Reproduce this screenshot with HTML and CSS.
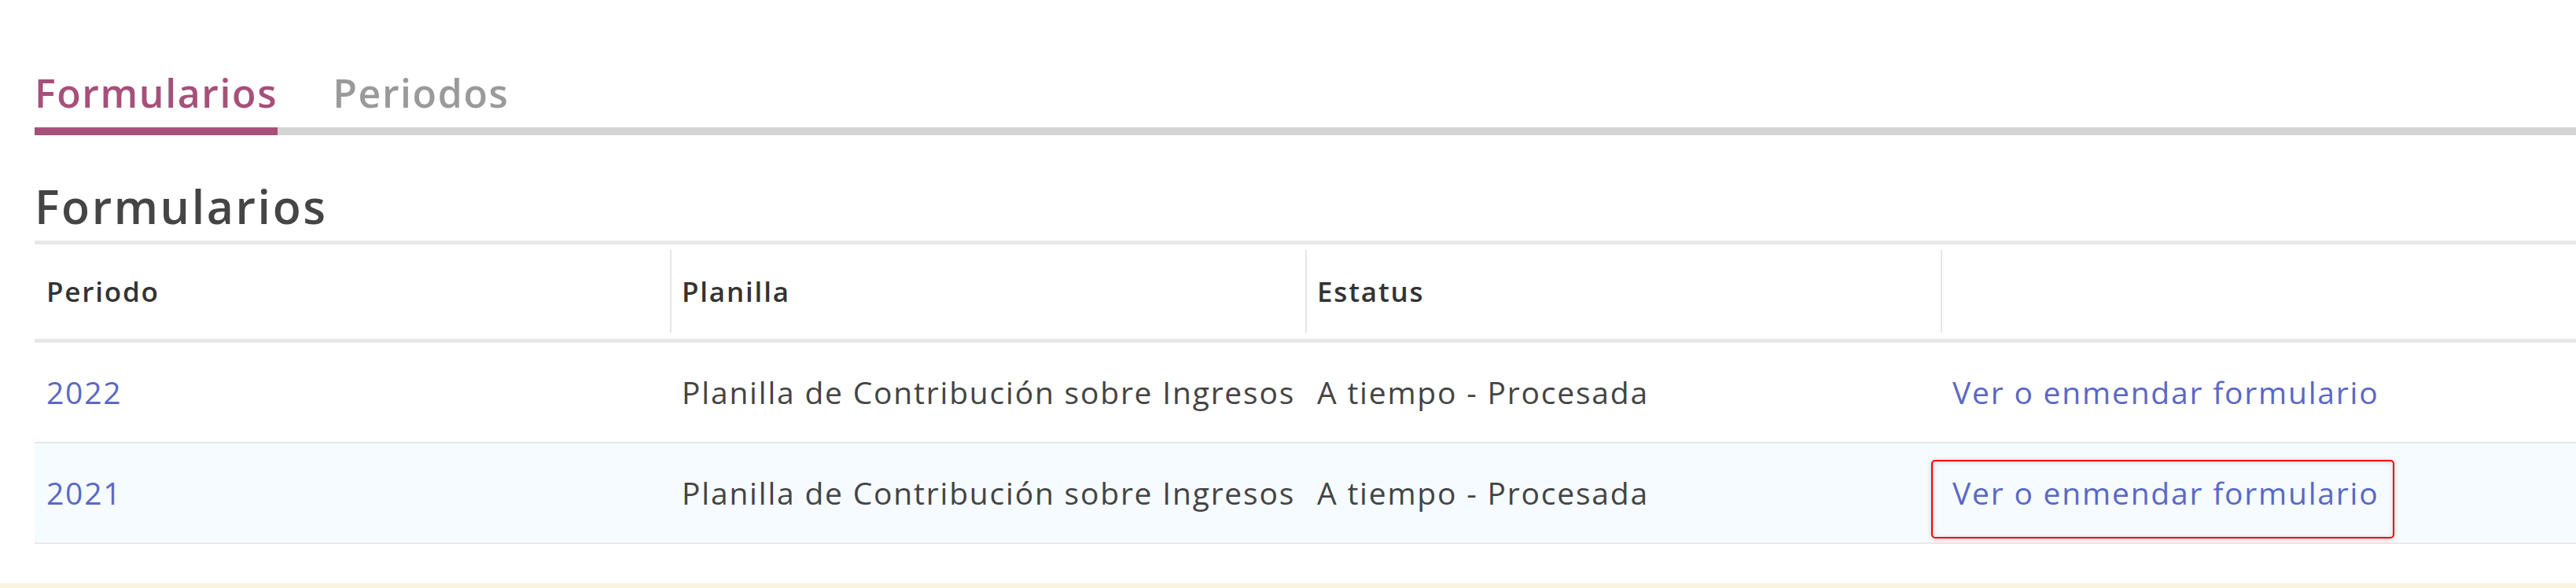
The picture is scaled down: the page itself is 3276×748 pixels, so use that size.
FILE: index.html
```html
<!DOCTYPE html>
<html lang="es">
<head>
<meta charset="utf-8">
<title>Formularios</title>
<link rel="stylesheet" href="styles.css">
</head>
<body>
<main class="page">
  <nav class="tabs">
    <a class="tab tab-active" href="#">Formularios</a>
    <a class="tab" href="#">Periodos</a>
  </nav>
  <h2 class="title">Formularios</h2>
  <div class="grid" role="table">
    <div class="row head" role="row">
      <div class="hcell" role="columnheader"><span class="hin first">Periodo</span></div>
      <div class="hcell" role="columnheader"><span class="hin">Planilla</span></div>
      <div class="hcell" role="columnheader"><span class="hin">Estatus</span></div>
      <div class="hcell" role="columnheader"><span class="hin"></span></div>
    </div>
    <div class="row body" role="row">
      <div class="cell" role="cell"><a class="link" href="#">2022</a></div>
      <div class="cell" role="cell">Planilla de Contribución sobre Ingresos</div>
      <div class="cell" role="cell">A tiempo - Procesada</div>
      <div class="cell" role="cell"><a class="link action" href="#">Ver o enmendar formulario</a></div>
    </div>
    <div class="row body alt" role="row">
      <div class="cell" role="cell"><a class="link" href="#">2021</a></div>
      <div class="cell" role="cell">Planilla de Contribución sobre Ingresos</div>
      <div class="cell" role="cell">A tiempo - Procesada</div>
      <div class="cell" role="cell"><a class="link action focused" href="#">Ver o enmendar formulario</a></div>
    </div>
  </div>
</main>
<div class="notice"></div>
</body>
</html>
```
FILE: styles.css
```css
html, body {
  margin: 0;
  padding: 0;
  background: #ffffff;
}
body {
  font-family: "Open Sans", "Noto Sans", sans-serif;
  color: #444444;
  overflow: hidden;
}
.page {
  padding: 84px 0 0 44px;
}
.tabs {
  display: flex;
  gap: 70px;
  border-bottom: 10px solid #d4d4d4;
}
.tab {
  font-size: 50px;
  line-height: 68px;
  font-weight: 600;
  letter-spacing: 1.6px;
  color: #9a9a9a;
  text-decoration: none;
  padding: 0 0 10px 0;
  margin-bottom: -10px;
  border-bottom: 10px solid transparent;
}
.tab-active {
  color: #a6507a;
  border-bottom-color: #a6507a;
}
.title {
  margin: 50px 0 4px;
  font-size: 59px;
  line-height: 80px;
  font-weight: 600;
  letter-spacing: 2.6px;
  color: #454545;
}
.grid {
  display: flex;
  flex-direction: column;
}
.row {
  display: grid;
  grid-template-columns: repeat(4, 1fr);
}
.head {
  border-top: 5px solid #e8e8e8;
  border-bottom: 5px solid #e8e8e8;
  height: 120px;
}
.hcell {
  display: flex;
  padding: 7px 0 8px;
}
.hin {
  flex: 1;
  display: flex;
  align-items: center;
  border-left: 2px solid #e6e6e6;
  padding-left: 13px;
  font-size: 35px;
  font-weight: 600;
  color: #333333;
  letter-spacing: 1.8px;
}
.hin.first {
  border-left-color: transparent;
}
.body {
  height: 126px;
  border-bottom: 2px solid #e8e8e8;
}
.alt {
  background: #f5fbfe;
}
.cell {
  display: flex;
  align-items: center;
  padding-left: 15px;
  font-size: 39px;
  line-height: 54px;
  font-weight: 400;
  letter-spacing: 1.8px;
  color: #444444;
  white-space: nowrap;
}
.link {
  color: #5a68c6;
  text-decoration: none;
}
.action {
  position: relative;
  display: inline-block;
}
.focused::after {
  content: "";
  position: absolute;
  top: -15px;
  bottom: -31px;
  left: -27px;
  right: -20px;
  border: 2px solid #ff0000;
  border-radius: 5px;
  box-shadow: 0 1px 6px rgba(0, 0, 0, 0.18), inset 0 1px 6px rgba(0, 0, 0, 0.14);
}
.notice {
  margin-top: 50px;
  height: 6px;
  background: #fbf3e0;
}
```
